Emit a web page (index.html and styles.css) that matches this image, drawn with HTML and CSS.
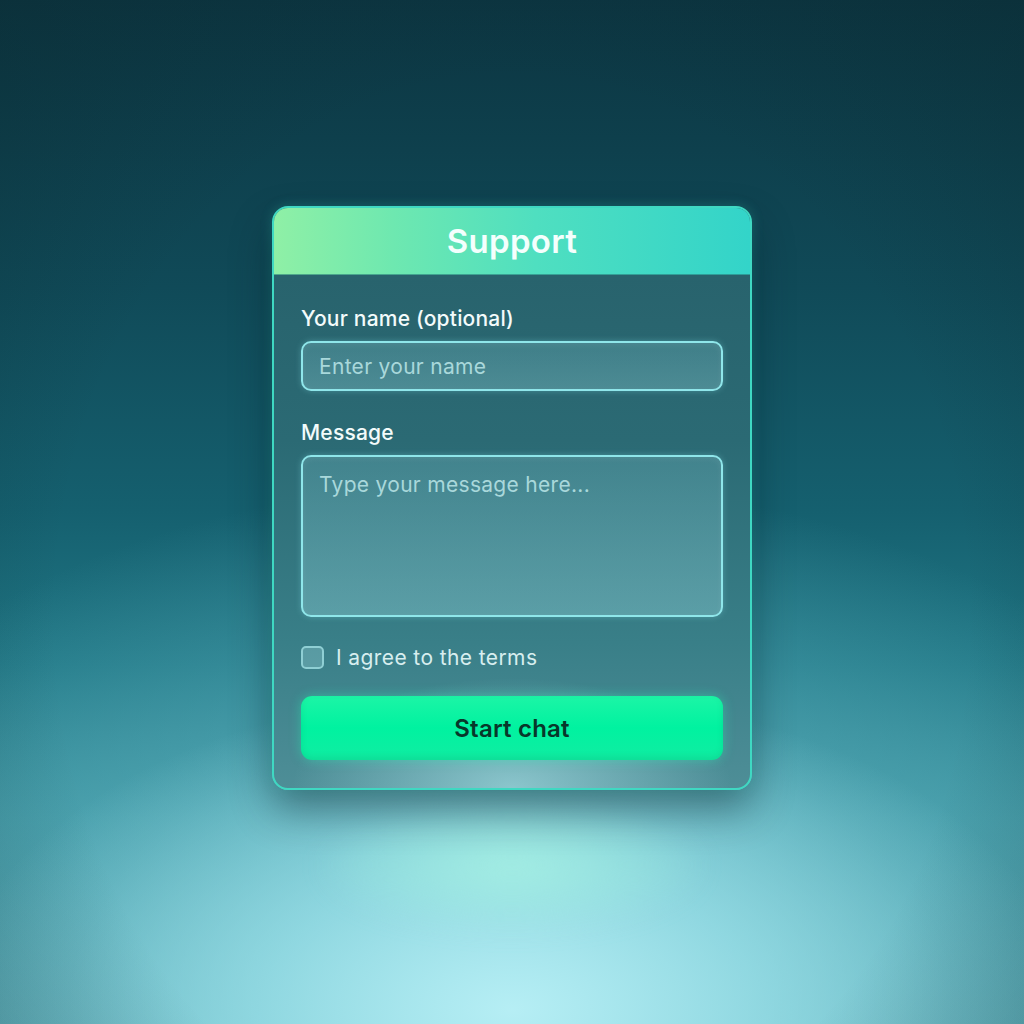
FILE: index.html
```html
<!DOCTYPE html>
<html>
<head>
<meta charset="utf-8">
<link rel="stylesheet" href="styles.css">
</head>
<body>
<div class="scene">
  <div class="glow"></div>
  <form class="card">
    <div class="card-header">Support</div>
    <div class="card-body">
      <label class="label" for="name">Your name (optional)</label>
      <div class="input" id="name">Enter your name</div>
      <label class="label label-msg" for="msg">Message</label>
      <div class="textarea" id="msg">Type your message here...</div>
      <div class="check-row">
        <span class="checkbox"></span>
        <span class="check-text">I agree to the terms</span>
      </div>
      <div class="button">Start chat</div>
    </div>
  </form>
</div>
</body>
</html>
```
FILE: styles.css
```css
* { box-sizing: border-box; }
html, body { margin: 0; padding: 0; }
body {
  width: 1024px;
  height: 1024px;
  overflow: hidden;
  font-family: Inter, "Noto Sans", "Liberation Sans", sans-serif;
}
.scene {
  position: relative;
  width: 1024px;
  height: 1024px;
  display: flex;
  justify-content: center;
  align-items: flex-start;
  padding-top: 206px;
  background:
    radial-gradient(ellipse 760px 900px at 512px 620px, rgba(0,0,0,0) 60%, rgba(10,40,45,0.35) 100%),
    radial-gradient(ellipse 560px 320px at 512px 1010px, rgba(185,240,246,0.95) 0%, rgba(160,228,236,0.7) 45%, rgba(130,210,220,0) 100%),
    radial-gradient(ellipse 800px 520px at 512px 1000px, rgba(130,210,220,0.85) 0%, rgba(90,175,188,0.55) 55%, rgba(40,120,135,0) 100%),
    linear-gradient(180deg, #0c3541 0%, #104a58 28%, #15606f 50%, #217886 65%, #3f96a2 80%, #5aa8b2 100%);
}
.glow {
  position: absolute;
  left: 322px;
  top: 800px;
  width: 380px;
  height: 130px;
  border-radius: 50%;
  background: radial-gradient(ellipse at center, rgba(170,245,228,0.75) 0%, rgba(160,238,225,0.4) 45%, rgba(150,235,220,0) 75%);
  filter: blur(12px);
}
.card {
  position: relative;
  width: 480px;
  height: 584px;
  margin: 0;
  border: 2px solid #3fd8c2;
  border-radius: 16px;
  overflow: hidden;
  background: linear-gradient(180deg, #27606a 0%, #2b6a74 40%, #397f88 75%, #4e8e97 100%);
  box-shadow: 0 20px 40px rgba(5, 30, 40, 0.45), 0 0 12px rgba(64, 220, 200, 0.25);
  display: flex;
  flex-direction: column;
}
.card-header {
  height: 67px;
  flex: none;
  display: flex;
  align-items: center;
  justify-content: center;
  background: linear-gradient(90deg, #8ff0a6 0%, #6ee8b0 25%, #4fdfc0 55%, #33d4c9 100%);
  color: #f4fffd;
  font-size: 33px;
  font-weight: 600;
  letter-spacing: 0.3px;
  border-bottom: 1px solid rgba(40, 120, 120, 0.6);
}
.card-body {
  flex: 1;
  display: flex;
  flex-direction: column;
  padding: 32px 27px 27px;
  background: radial-gradient(ellipse 220px 110px at 50% 100%, rgba(180,235,240,0.6) 0%, rgba(180,235,240,0) 100%);
}
.label {
  color: #f3fbfb;
  font-size: 21px;
  font-weight: 500;
  line-height: 24px;
  margin-bottom: 10px;
  letter-spacing: 0.2px;
}
.label-msg { margin-top: 30px; }
.input, .textarea {
  width: 422px;
  border: 2px solid #8fe6ea;
  border-radius: 10px;
  background: linear-gradient(180deg, rgba(120,190,200,0.28) 0%, rgba(140,205,212,0.35) 100%);
  box-shadow: inset 0 2px 6px rgba(255,255,255,0.08), 0 0 6px rgba(140,230,235,0.3);
  color: #a9d8db;
  font-size: 21px;
  line-height: 24px;
  padding: 2px 16px 0;
  letter-spacing: 0.3px;
}
.input {
  height: 50px;
  display: flex;
  align-items: center;
}
.textarea {
  height: 162px;
  padding-top: 16px;
  background: linear-gradient(180deg, rgba(110,180,190,0.32) 0%, rgba(140,205,212,0.42) 100%);
}
.check-row {
  display: flex;
  align-items: center;
  gap: 12px;
  margin-top: 29px;
  height: 22px;
}
.checkbox {
  width: 23px;
  height: 23px;
  border: 2px solid #8fcfd4;
  border-radius: 5px;
  background: rgba(150, 205, 212, 0.35);
}
.check-text {
  color: #d7eeef;
  font-size: 21px;
  font-weight: 400;
  letter-spacing: 0.4px;
}
.button {
  margin-top: 28px;
  height: 64px;
  border-radius: 11px;
  background: linear-gradient(180deg, #1cf5a6 0%, #00f2a0 50%, #10eda2 100%);
  box-shadow: 0 0 12px rgba(40, 240, 180, 0.45), inset 0 -3px 6px rgba(0, 120, 90, 0.15);
  display: flex;
  align-items: center;
  justify-content: center;
  color: #08372a;
  font-size: 24px;
  font-weight: 600;
  letter-spacing: 0.2px;
}
```
